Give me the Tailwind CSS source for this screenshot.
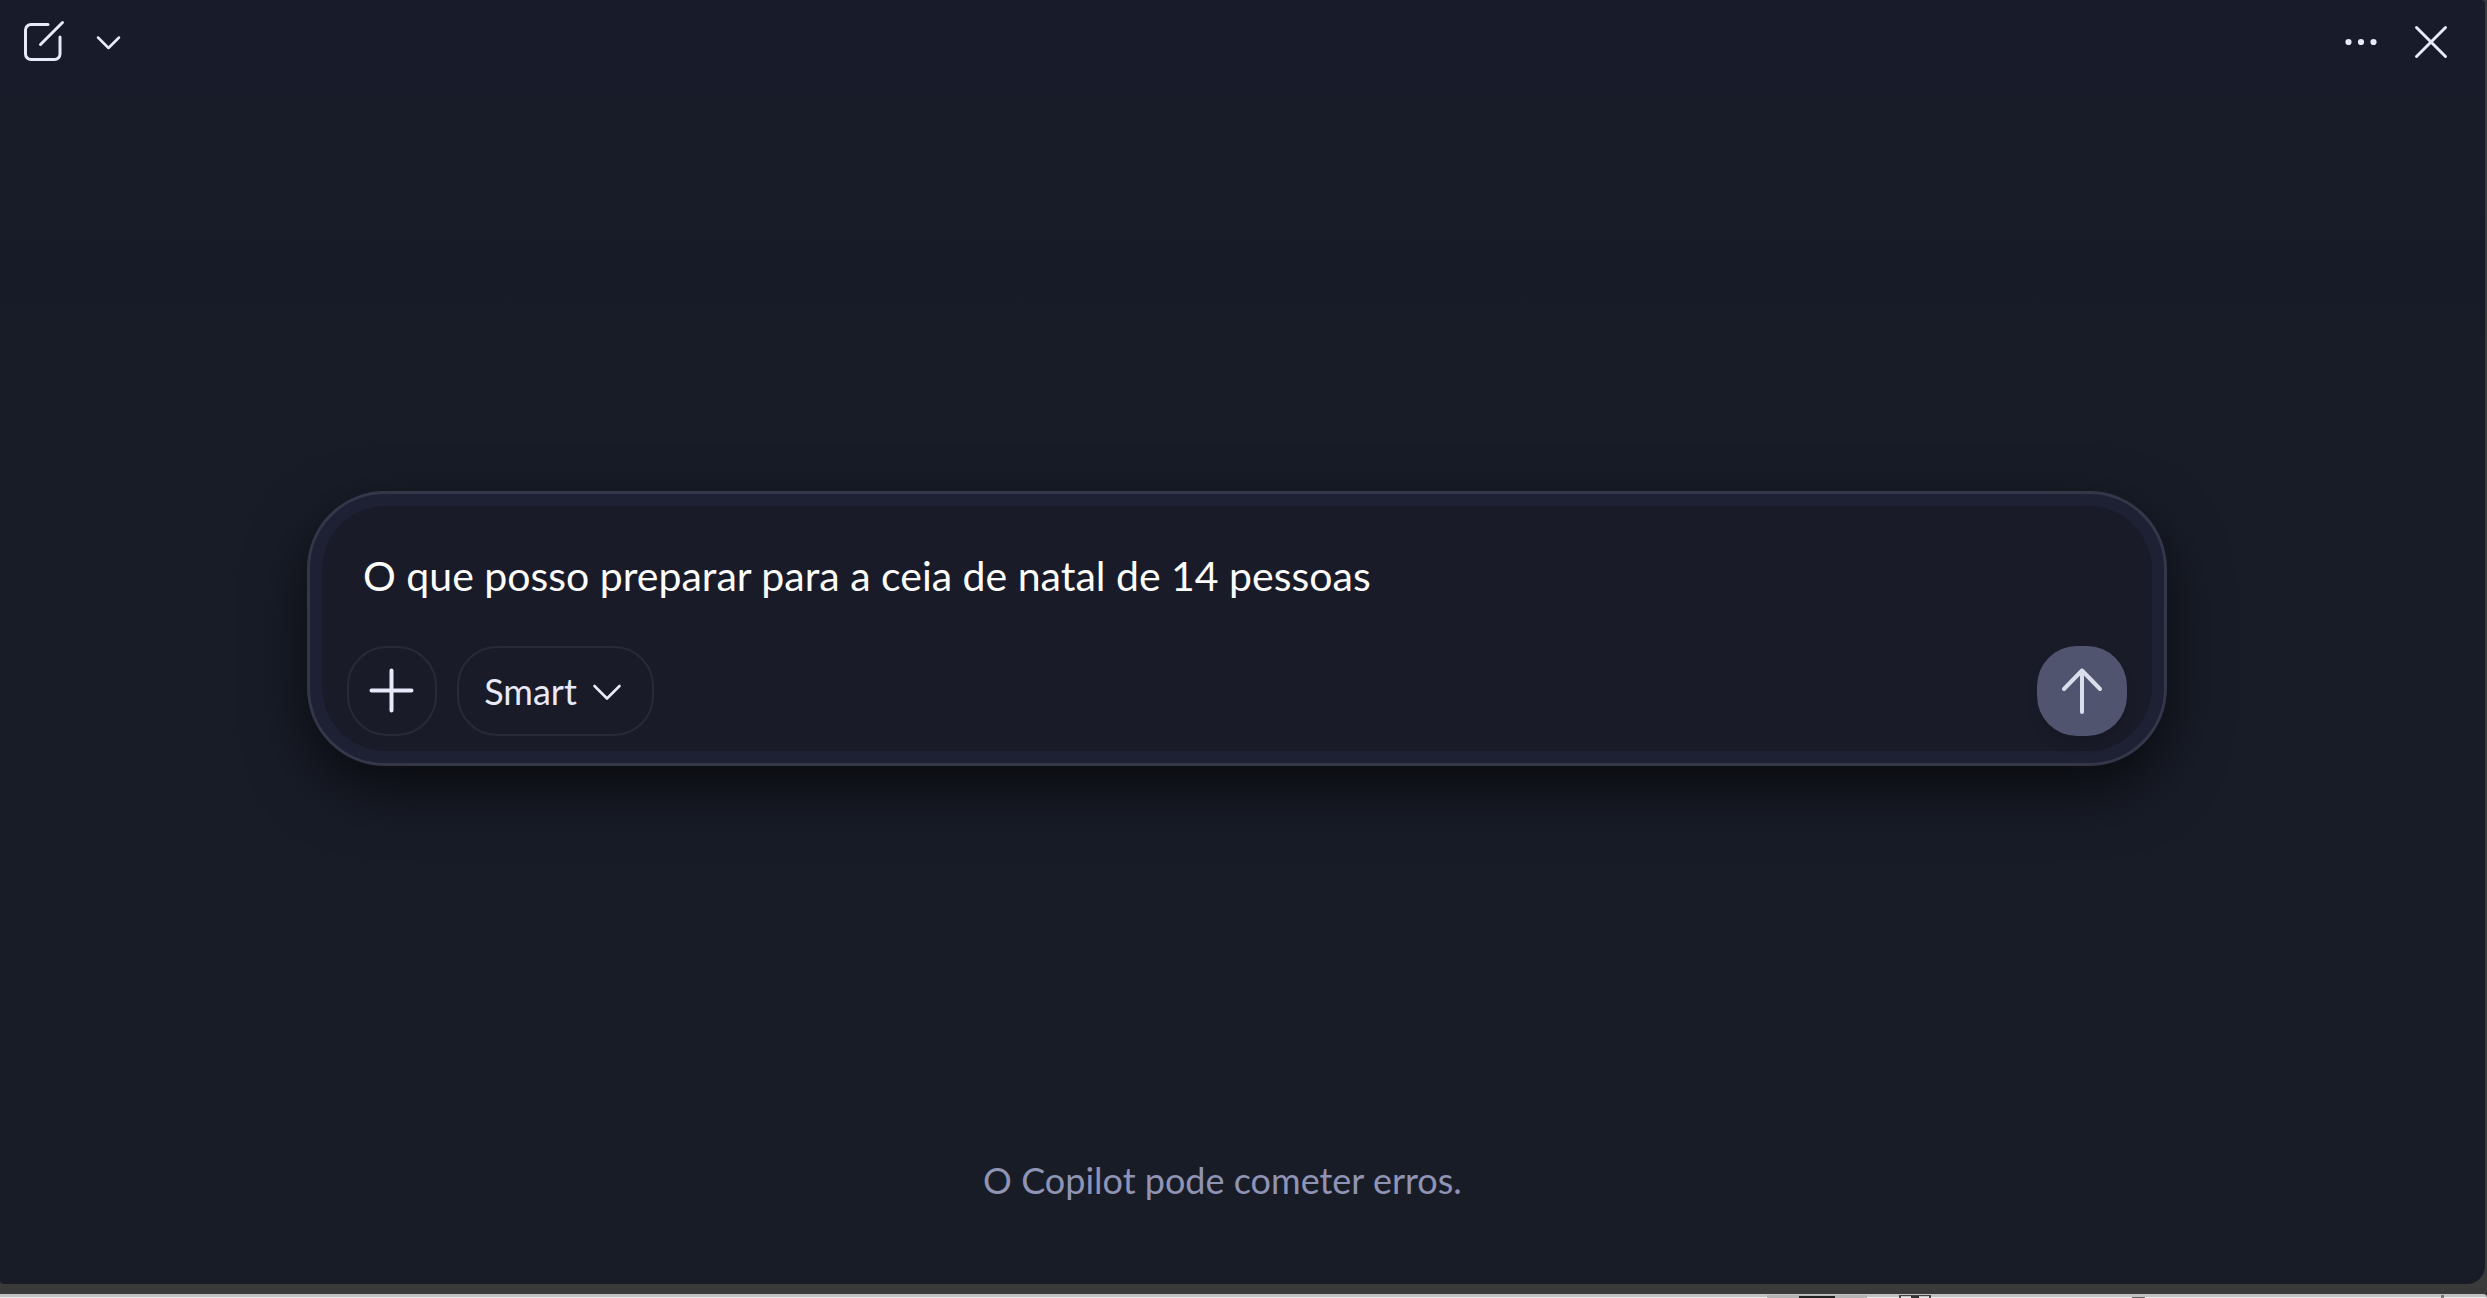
<!DOCTYPE html>
<html lang="pt-BR">
<head>
    <meta charset="utf-8">
    <meta name="viewport" content="width=device-width, initial-scale=1.0">
    <title>Copilot</title>
    <script src="https://cdn.jsdelivr.net/npm/@tailwindcss/browser@4"></script>
</head>
<body class="bg-[#3a3a3a] font-['Lato','Open_Sans',sans-serif] text-[#e8e9fa] min-h-screen flex flex-col">

    <div class="flex-1 flex flex-col mr-[2px] bg-linear-to-b from-[#181b29] to-[#181c27] to-30% rounded-br-[18px] rounded-bl-[4px] rounded-tr-[4px] overflow-hidden">

        <header class="h-[100px] pt-[18px] pl-5 pr-[30px] flex justify-between items-start">
            <div class="flex items-center gap-6">
                <button type="button" aria-label="Nova conversa">
                    <svg class="w-12 h-12 block" viewBox="0 0 48 48" fill="none" stroke="currentColor" stroke-width="3" stroke-linecap="round" stroke-linejoin="round">
                        <path d="M28 6.500H11A5.500 5.500 0 0 0 5.500 12V36A5.500 5.500 0 0 0 11 41.500H34.500A5.500 5.500 0 0 0 40 36V19"/>
                        <path d="M42.500 4.500L20.500 26.500"/>
                    </svg>
                </button>
                <button type="button" aria-label="Conversas">
                    <svg class="w-8 h-8 block" viewBox="0 0 32 32" fill="none" stroke="currentColor" stroke-width="2.500" stroke-linecap="round" stroke-linejoin="round">
                        <path d="M6 11.500L16.500 22L27 11.500"/>
                    </svg>
                </button>
            </div>
            <div class="flex items-center gap-[30px]">
                <button type="button" aria-label="Mais opções">
                    <svg class="w-8 h-8 block" viewBox="0 0 32 32" fill="currentColor">
                        <circle cx="3.500" cy="16" r="3.100"/>
                        <circle cx="16" cy="16" r="3.100"/>
                        <circle cx="28.500" cy="16" r="3.100"/>
                    </svg>
                </button>
                <button type="button" aria-label="Fechar">
                    <svg class="w-12 h-12 block" viewBox="0 0 48 48" fill="none" stroke="currentColor" stroke-width="3" stroke-linecap="round">
                        <path d="M9.500 9.500L38.500 38.500M38.500 9.500L9.500 38.500"/>
                    </svg>
                </button>
            </div>
        </header>

        <main class="flex-1 flex items-center pl-[307px] pr-[318px]">
            <form class="w-full rounded-[78px] border-[3px] border-[#34374a] bg-[#1e2034] p-3 shadow-[0_24px_60px_0_rgba(0,0,0,0.6)]">
                <div class="rounded-[64px] bg-[#191b29] px-[25px] pt-[46px] pb-[15px] flex flex-col gap-[46px]">
                    <input type="text" aria-label="Mensagem" value="O que posso preparar para a ceia de natal de 14 pessoas" class="w-full h-12 px-4 bg-transparent text-white text-[41px] leading-[48px] outline-none">
                    <div class="flex items-center gap-5">
                        <button type="button" aria-label="Adicionar" class="w-[90px] h-[90px] rounded-[40px] border-2 border-[#282a38] flex items-center justify-center">
                            <svg class="w-12 h-12" viewBox="0 0 48 48" fill="none" stroke="currentColor" stroke-width="4" stroke-linecap="round">
                                <path d="M23.500 3.500V43.500M3.500 23.500H43.500"/>
                            </svg>
                        </button>
                        <button type="button" class="w-[197px] h-[90px] rounded-[40px] border-2 border-[#282a38] pr-1 flex items-center justify-center gap-[14px] text-[36px] leading-[48px]">
                            Smart
                            <svg class="w-8 h-8" viewBox="0 0 32 32" fill="none" stroke="currentColor" stroke-width="2.600" stroke-linecap="round" stroke-linejoin="round">
                                <path d="M3.500 11L16 23.500L28.500 11"/>
                            </svg>
                        </button>
                        <button type="submit" aria-label="Enviar" class="ml-auto w-[90px] h-[90px] rounded-[40px] bg-[#50546f] text-[#dadeec] flex items-center justify-center shadow-lg">
                            <svg class="w-12 h-12" viewBox="0 0 48 48" fill="none" stroke="currentColor" stroke-width="4" stroke-linecap="round" stroke-linejoin="round">
                                <path d="M24 45V3.500M6 22L24 3.500L42 22"/>
                            </svg>
                        </button>
                    </div>
                </div>
            </form>
        </main>

        <footer class="pb-20 pr-10 text-center text-[36px] leading-[48px] text-[#8f93b4]">O Copilot pode cometer erros.</footer>
    </div>

    <!-- window edge and the top of the status bar below it -->
    <div class="h-[14px] pt-[10px]">
        <div class="h-1 bg-[#f0f0f0] border-t-[3px] border-[#c2c2c2] rounded-tr-[4px]">
            <div class="-mt-[2px] h-[3px] ml-[1767px] mr-[43px] flex items-end">
                <span class="w-[100px] h-[3px] bg-[#b4b4b4] flex justify-center items-end"><span class="w-9 h-[2px] bg-[#222222]"></span></span>
                <span class="w-8 h-[3px] ml-8 border-x-2 border-t border-[#444444] flex justify-center"><span class="w-2 h-[3px] bg-[#333333]"></span></span>
                <span class="w-[13px] h-px ml-[201px] bg-[#666666]"></span>
                <span class="w-[3px] h-[3px] ml-auto bg-[#777777]"></span>
            </div>
        </div>
    </div>

</body>
</html>
